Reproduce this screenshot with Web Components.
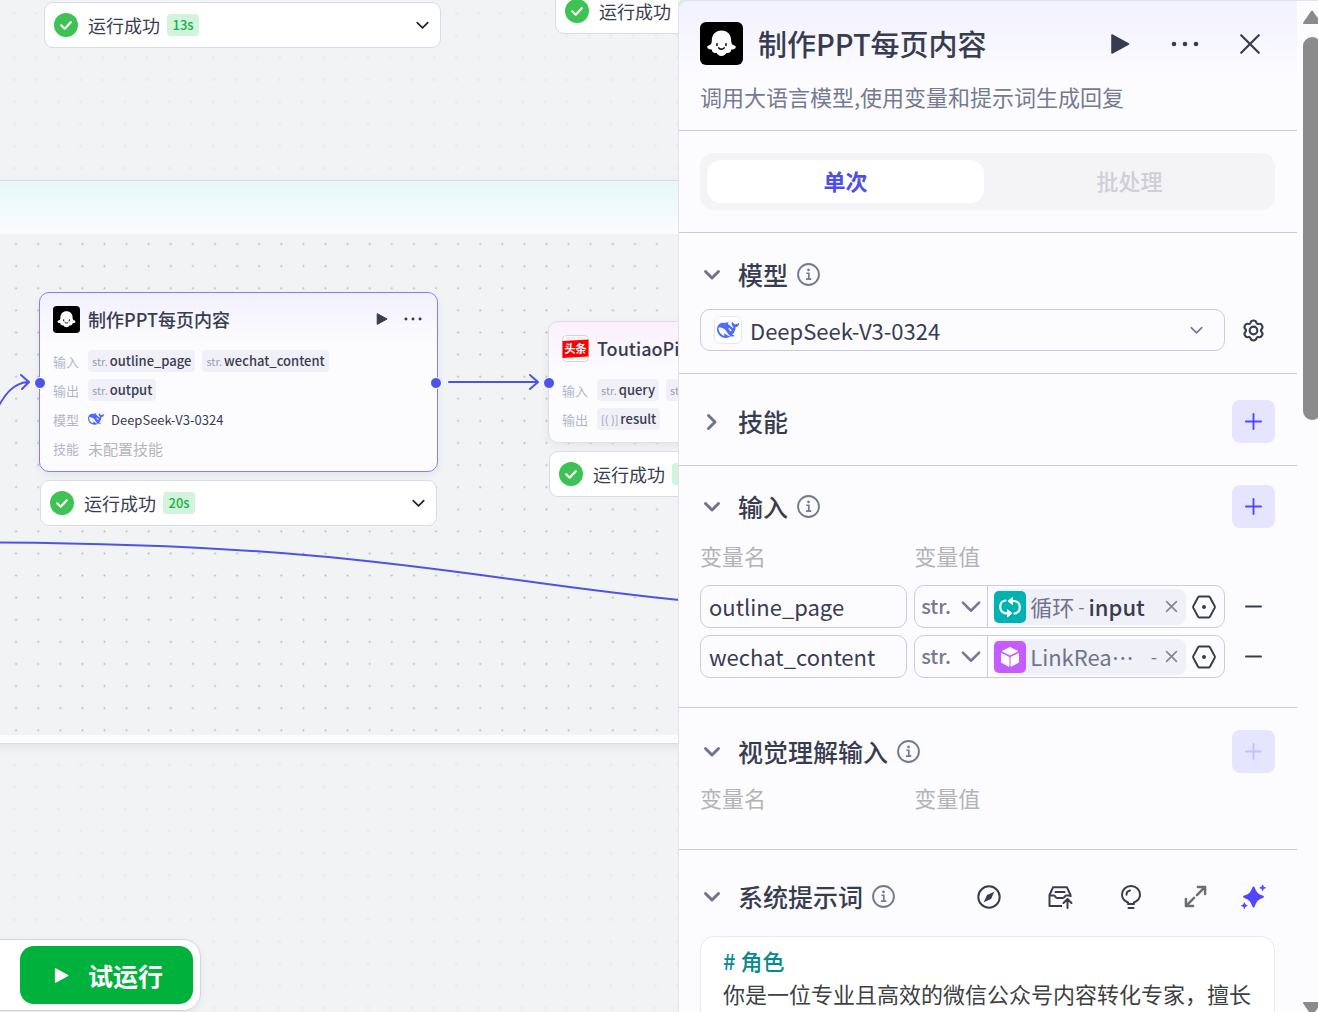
<!DOCTYPE html>
<html lang="zh-CN">
<head>
<meta charset="utf-8">
<title>工作流编辑器</title>
<style>
  body {
    margin: 0;
    font-family: "Noto Sans CJK SC", "Noto Sans", sans-serif;
    color: #383c4f;
    background: #f2f3f5;
  }
</style>
</head>
<body>
<flow-app>
  <flow-canvas slot="canvas">
    <flow-loop></flow-loop>
    <flow-edges></flow-edges>

    <run-status style="left: 44px; top: 2px" time="13s"></run-status>
    <run-status style="left: 555px; top: -12px"></run-status>

    <flow-node style="left: 39px; top: 292px; width: 399px" title="制作PPT每页内容" icon="ghost" selected>
      <node-row label="输入"><var-tag>outline_page</var-tag><var-tag>wechat_content</var-tag></node-row>
      <node-row label="输出"><var-tag>output</var-tag></node-row>
      <node-row label="模型"><ui-icon name="whale" style="--size: 16px; color: #4d6bfe"></ui-icon><model-name>DeepSeek-V3-0324</model-name></node-row>
      <node-row label="技能"><empty-text>未配置技能</empty-text></node-row>
    </flow-node>
    <run-status style="left: 40px; top: 480px" time="20s"></run-status>

    <flow-node style="left: 548px; top: 321px; width: 399px; --tint: #faf0fd" title="ToutiaoPi" icon="toutiao">
      <node-row label="输入"><var-tag>query</var-tag><var-tag></var-tag></node-row>
      <node-row label="输出"><var-tag type="[( )]">result</var-tag></node-row>
    </flow-node>
    <run-status style="left: 549px; top: 451px"></run-status>

    <flow-port style="left: 34px; top: 377px"></flow-port>
    <flow-port style="left: 430px; top: 377px"></flow-port>
    <flow-port style="left: 543px; top: 377px"></flow-port>

    <test-bar></test-bar>
  </flow-canvas>

  <side-panel slot="panel">
    <panel-header title="制作PPT每页内容">调用大语言模型,使用变量和提示词生成回复</panel-header>
    <mode-tabs></mode-tabs>

    <panel-section title="模型" info style="--top: 20px; --bottom: 22px; --gap: 13px">
      <model-picker></model-picker>
    </panel-section>

    <panel-section title="技能" collapsed style="--top: 26px; --bottom: 22px">
      <add-button slot="actions"></add-button>
    </panel-section>

    <panel-section title="输入" info style="--top: 19px; --bottom: 29px; --gap: 11px">
      <add-button slot="actions"></add-button>
      <var-labels></var-labels>
      <var-row name="outline_page" icon="loop" source="循环" field="input"></var-row>
      <var-row name="wechat_content" icon="cube" source="LinkRea⋯"></var-row>
    </panel-section>

    <panel-section title="视觉理解输入" info style="--top: 22px; --bottom: 29px; --gap: 8px">
      <add-button slot="actions" disabled></add-button>
      <var-labels></var-labels>
    </panel-section>

    <panel-section title="系统提示词" info style="--top: 25px; --bottom: 22px; --gap: 18px">
      <prompt-tools slot="actions"></prompt-tools>
      <prompt-editor></prompt-editor>
    </panel-section>
  </side-panel>
</flow-app>

<script>
// [viewBox, markup]
const ICONS = {
  ghost: ['0 0 43 43', `<rect width="43" height="43" rx="6" fill="#000"/>
    <path fill="#fff" d="M21.500 8.500c-5.900 0-9.700 4.300-9.700 10 0 1.700-.3 2.900-1.100 3.900-.9.900-3.500.9-3.500 2.400 0 1.900 2.300 3.100 4.600 2.700 0 2.600 2.200 4.100 4.700 3.300.8 2 2.800 3.200 5 3.200s4.200-1.200 5-3.200c2.500.8 4.700-.7 4.700-3.300 2.300.4 4.600-.8 4.600-2.700 0-1.500-2.600-1.500-3.500-2.400-.8-1-1.100-2.200-1.100-3.900 0-5.700-3.800-10-9.700-10z"/>
    <path fill="none" stroke="#000" stroke-width="1.500" stroke-linecap="round" d="M17 21.800v1.800M26 21.800v1.800M18.800 25.900c1.500 1.800 4 1.800 5.400 0"/>`],
  toutiao: ['0 0 27 27', `<rect x=".5" y=".5" width="26" height="26" rx="4" fill="#fff" stroke="#cfd1dc"/>
    <path d="M4 3h9M15 3h8M4 24h8M14 24h9" stroke="#ddd"/><path fill="#f00" d="M.5 6 26.500 4.500v17L.5 23z"/>
    <text x="13.500" y="18" text-anchor="middle" font-size="11" font-weight="700" fill="#fff">头条</text>`],
  whale: ['0 0 24 24', `<path fill="currentColor" d="M23.748 4.482c-.254-.124-.364.113-.512.234-.051.039-.094.09-.137.136-.372.397-.806.657-1.373.626-.829-.046-1.537.214-2.163.848-.133-.782-.575-1.248-1.247-1.548-.352-.156-.708-.311-.955-.65-.172-.241-.219-.51-.305-.774-.055-.16-.11-.323-.293-.35-.2-.031-.278.136-.356.276-.313.572-.434 1.202-.422 1.84.027 1.436.633 2.58 1.838 3.393.137.093.172.187.129.323-.082.28-.18.552-.266.833-.055.179-.137.217-.329.14a5.526 5.526 0 01-1.736-1.18c-.857-.828-1.631-1.742-2.597-2.458a11.365 11.365 0 00-.689-.471c-.985-.957.13-1.743.388-1.836.27-.098.093-.432-.779-.428-.872.004-1.67.295-2.687.684a3.055 3.055 0 01-.465.137 9.597 9.597 0 00-2.883-.102c-1.885.21-3.39 1.102-4.497 2.623C.082 8.606-.231 10.684.152 12.85c.403 2.284 1.569 4.175 3.36 5.653 1.858 1.533 3.997 2.284 6.438 2.14 1.482-.085 3.133-.284 4.994-1.86.47.234.962.327 1.78.397.63.059 1.236-.03 1.705-.128.735-.156.684-.837.419-.961-2.155-1.004-1.682-.595-2.113-.926 1.096-1.296 2.746-2.642 3.392-7.003.05-.347.007-.565 0-.845-.004-.17.035-.237.23-.256a4.173 4.173 0 001.545-.475c1.396-.763 1.96-2.015 2.093-3.517.02-.23-.004-.467-.247-.588zM11.581 18c-2.089-1.642-3.102-2.183-3.52-2.16-.392.024-.321.471-.235.763.09.288.207.486.371.739.114.167.192.416-.113.603-.673.416-1.842-.14-1.897-.167-1.361-.802-2.5-1.86-3.301-3.307-.774-1.393-1.224-2.887-1.298-4.482-.02-.386.093-.522.477-.592a4.696 4.696 0 011.529-.039c2.132.312 3.946 1.265 5.468 2.774.868.86 1.525 1.887 2.202 2.891.72 1.066 1.494 2.082 2.48 2.914.348.292.625.514.891.677-.802.09-2.14.11-3.054-.614zm1-6.44a.306.306 0 01.415-.287.302.302 0 01.2.288.306.306 0 01-.31.307.303.303 0 01-.304-.308zm3.11 1.596c-.2.081-.399.151-.59.16a1.245 1.245 0 01-.798-.254c-.274-.23-.47-.358-.552-.758a1.73 1.73 0 01.016-.588c.07-.327-.008-.537-.239-.727-.187-.156-.426-.199-.688-.199a.559.559 0 01-.254-.078c-.11-.054-.2-.19-.114-.358.028-.054.16-.186.192-.21.356-.202.767-.136 1.146.016.352.144.618.408 1.001.782.391.451.462.576.685.914.176.265.336.537.445.848.067.195-.019.354-.25.452z"/>`],
  check: ['0 0 24 24', `<circle cx="12" cy="12" r="12" fill="#3ec254"/><path d="M7.200 12.300 10.700 15.700 16.800 9.200" fill="none" stroke="#fff" stroke-width="2.200" stroke-linecap="round" stroke-linejoin="round"/>`],
  play: ['0 0 20 20', `<path fill="currentColor" stroke="currentColor" stroke-width="1.600" stroke-linejoin="round" d="M2 1v18L18.500 10z"/>`],
  dots: ['0 0 28 28', `<g fill="currentColor"><circle cx="3" cy="14" r="2.300"/><circle cx="14" cy="14" r="2.300"/><circle cx="25" cy="14" r="2.300"/></g>`],
  close: ['0 0 20 20', `<path d="M1.200 1.200 18.800 18.800M18.800 1.200 1.200 18.800" stroke="currentColor" stroke-width="2.200" stroke-linecap="round"/>`],
  cross: ['0 0 12 12', `<path d="M1.500 1.500 10.500 10.500M10.500 1.500 1.500 10.500" stroke="currentColor" stroke-width="1.600" stroke-linecap="round"/>`],
  chevron: ['0 0 16 16', `<path d="M1.500 4.500 8 11 14.500 4.500" fill="none" stroke="currentColor" stroke-width="var(--stroke, 2)" stroke-linecap="round" stroke-linejoin="round"/>`],
  info: ['0 0 24 24', `<circle cx="12" cy="12" r="10.900" fill="none" stroke="currentColor" stroke-width="2"/>
    <circle cx="12" cy="7.200" r="1.400" fill="currentColor"/><path d="M9.800 10.700h2.500v5.900M9.300 16.800h5.600" fill="none" stroke="currentColor" stroke-width="1.800"/>`],
  gear: ['0 0 24 24', `<g fill="none" stroke="currentColor" stroke-width="2.200"><circle cx="12" cy="12" r="4"/>
    <path stroke-linejoin="round" d="M8.900 3.900C9.300 2.200 10.300 1.600 12 1.600s2.700.6 3.100 2.300c.3 1 1.300 1.500 2.300 1.200 1.700-.5 2.700.1 3.500 1.600.8 1.400.8 2.500-.4 3.700-.8.900-.8 2.300 0 3.200 1.200 1.200 1.200 2.300.4 3.700-.8 1.500-1.800 2.100-3.500 1.600-1-.3-2 .2-2.300 1.200-.4 1.700-1.400 2.300-3.100 2.300s-2.700-.6-3.100-2.300c-.3-1-1.300-1.500-2.300-1.200-1.700.5-2.700-.1-3.500-1.600-.8-1.400-.8-2.500.4-3.700.8-.9.8-2.300 0-3.200-1.200-1.200-1.200-2.300-.4-3.700.8-1.500 1.800-2.100 3.500-1.600 1 .3 2-.2 2.300-1.200z"/></g>`],
  plus: ['0 0 18 18', `<path d="M9 1v16M1 9h16" stroke="currentColor" stroke-width="2" stroke-linecap="round"/>`],
  minus: ['0 0 18 18', `<path d="M1 9h16" stroke="currentColor" stroke-width="2" stroke-linecap="round"/>`],
  hex: ['0 0 24 24', `<path fill="none" stroke="currentColor" stroke-width="2" stroke-linejoin="round" d="M7.300 1.500h9.400c.5 0 .9.200 1.200.7l4.800 8.900c.3.600.3 1.200 0 1.800l-4.800 8.900c-.3.500-.7.700-1.200.7H7.300c-.5 0-.9-.2-1.200-.7l-4.800-8.900c-.3-.6-.3-1.200 0-1.800l4.800-8.900c.3-.5.700-.7 1.200-.7z"/><circle cx="12" cy="12" r="2" fill="currentColor"/>`],
  loop: ['0 0 32 32', `<rect width="32" height="32" rx="5" fill="#00b2b2"/>
    <path fill="none" stroke="#fff" stroke-width="2.200" stroke-linecap="round" d="M11.500 9.500C4.500 10.500 4.500 21 11.500 22.300H15M20.500 22.500c7-1 7-11.500 0-12.500H17"/>
    <path fill="#fff" stroke="#fff" stroke-linejoin="round" d="M18.500 6.500v7.200L14 10zM13.500 18.700v7.200l4.500-3.600z"/>`],
  cube: ['0 0 32 32', `<rect width="32" height="32" rx="5" fill="#c55cff"/>
    <g fill="#fff" stroke="#fff" stroke-linejoin="round"><path d="M16 6.500 23.500 10.200 16 14 8.500 10.200z"/><path d="M7.500 12.500 15 16.300v9L7.500 21.300zM24.500 12.500 17 16.300v9l7.500-4z"/></g>`],
  compass: ['0 0 24 24', `<circle cx="12" cy="12" r="10.700" fill="none" stroke="currentColor" stroke-width="2"/><path fill="currentColor" d="M17.300 6.700 14 14 6.700 17.300 10 10z"/>`],
  inbox: ['0 0 24 24', `<g fill="none" stroke="currentColor" stroke-width="2" stroke-linejoin="round"><path d="M14 21H1.500V10L5 2.300h14L22.500 10v2"/><path d="M1.500 10.500H6c1.200 0 1.500 2.500 3 2.500h6c1.500 0 1.800-2.500 3-2.500h4.500"/><path stroke-linecap="round" d="M7.500 7h9M19.500 23v-8.500M15.500 18l4-4 4 4"/></g>`],
  bulb: ['0 0 24 24', `<g fill="none" stroke="currentColor" stroke-width="2" stroke-linecap="round" stroke-linejoin="round"><path d="M9 19v-1.500C5.500 16 3 13.300 3 9.800 3 4.600 7 1 12 1s9 3.600 9 8.800c0 3.500-2.500 6.200-6 7.700V19z"/><path d="M7.500 9.800c0-2.200 1.500-3.900 3.500-4.300M9.500 23h5"/></g>`],
  expand: ['0 0 24 24', `<g fill="none" stroke="currentColor" stroke-width="2.600" stroke-linecap="round" stroke-linejoin="round"><path d="M14.500 2H22v7.500M22 2l-8.500 8.500M9.500 22H2v-7.500M2 22l8.500-8.500"/></g>`],
  sparkle: ['0 0 26 26', `<g fill="currentColor" stroke="currentColor" stroke-linejoin="round"><path stroke-width="2" d="M13 3.500c1.900 5.800 4 7.900 9.800 9.800-5.800 1.900-7.900 4.200-9.800 10.200-1.900-6-4-8.300-9.800-10.200 5.800-1.900 7.900-4 9.800-9.800z"/><path d="M22.500 1c.5 2 1 2.500 3 3-2 .5-2.500 1-3 3-.5-2-1-2.500-3-3 2-.5 2.500-1 3-3zM3.500 19.500c.5 2 1 2.500 3 3-2 .5-2.500 1-3 3-.5-2-1-2.500-3-3 2-.5 2.500-1 3-3z"/></g>`],
};

// Base class: attaches an open root and fills it from render()
class Base extends HTMLElement {
  constructor() {
    super();
    this.attachShadow({ mode: 'open' });
  }

  connectedCallback() {
    this.shadowRoot.innerHTML = `
      <style>
        * { box-sizing: border-box; }
        :host { display: block; box-sizing: border-box; }
        button, input, select { font: inherit; color: inherit; margin: 0; padding: 0; border: 0; background: none; }
        button, select { cursor: pointer; }
        button { display: grid; place-items: center; }
        h1, h2, p { margin: 0; }
      </style>
      ${this.render()}
    `;
  }

  attr(name) {
    return this.getAttribute(name) || '';
  }
}

class UiIcon extends Base {
  render() {
    const [box, body] = ICONS[this.attr('name')];
    return `
      <style>
        :host { flex: none; width: var(--size, 24px); height: var(--size, 24px); }
        svg { display: block; width: 100%; height: 100%; overflow: visible; }
      </style>
      <svg viewBox="${box}" aria-hidden="true">${body}</svg>
    `;
  }
}

class FlowApp extends Base {
  render() {
    return `
      <style>
        :host {
          display: grid;
          grid-template-columns: minmax(0, 1fr) 640px;
          grid-template-rows: 100vh;
          overflow: hidden;
        }
        slot[name="canvas"]::slotted(*) { grid-area: 1 / 1 / 2 / 3; }
        slot[name="panel"]::slotted(*) { grid-area: 1 / 2 / 2 / 3; }
      </style>
      <slot name="canvas"></slot>
      <slot name="panel"></slot>
    `;
  }
}

class FlowCanvas extends Base {
  render() {
    return `
      <style>
        :host { position: relative; overflow: hidden; background: #f2f3f5; }
        svg { position: absolute; width: 100%; height: 100%; }
      </style>
      <svg aria-hidden="true">
        <pattern id="dots" x="3.400" y="2.400" width="22.100" height="22.100" patternUnits="userSpaceOnUse">
          <circle cx="11" cy="11" r="1.700" fill="#ebecef"/>
        </pattern>
        <rect width="100%" height="100%" fill="url(#dots)"/>
      </svg>
      <slot></slot>
    `;
  }
}

class FlowLoop extends Base {
  render() {
    return `
      <style>
        :host {
          position: absolute;
          left: -20px;
          right: -20px;
          top: 180px;
          height: 564px;
          padding: 53px 0 8px;
          border: 1px solid #d9dbe6;
          background: linear-gradient(#e7f8f7, #fcfcff 53px);
          box-shadow: 0 3px 10px rgba(0, 0, 0, .07);
        }
        svg { display: block; width: 100%; height: 100%; background: #f2f3f5; }
      </style>
      <svg aria-hidden="true">
        <pattern id="dots" x="2" y="-1" width="22.100" height="22.100" patternUnits="userSpaceOnUse">
          <circle cx="11" cy="11" r="1" fill="#b4b6ba"/>
        </pattern>
        <rect width="100%" height="100%" fill="url(#dots)"/>
      </svg>
    `;
  }
}

class FlowEdges extends Base {
  render() {
    return `
      <style>
        :host { position: absolute; inset: 0; }
        svg { width: 100%; height: 100%; }
      </style>
      <svg aria-hidden="true" fill="none" stroke="#4d53e8" stroke-width="2" stroke-linecap="round" stroke-linejoin="round">
        <path d="M-4 411C4 395 13 383 28 382M21 375l8 7-7 7"/>
        <path d="M449 382h88M530 375l8 7-8 7"/>
        <path d="M-2 542.500C380 545 480 582 700 602"/>
      </svg>
    `;
  }
}

class FlowPort extends Base {
  render() {
    return `
      <style>
        :host {
          position: absolute;
          width: 12px;
          height: 12px;
          border: 1px solid #fff;
          border-radius: 50%;
          background: #4d53e8;
        }
      </style>
    `;
  }
}

class RunStatus extends Base {
  render() {
    return `
      <style>
        :host {
          position: absolute;
          display: flex;
          align-items: center;
          width: 397px;
          height: 46px;
          padding: 0 11px 0 9px;
          border: 1px solid #d9dbe8;
          border-radius: 9px;
          background: #fff;
        }
        .text { margin: 0 7px 0 10px; white-space: nowrap; font-size: 18px; }
        .time {
          min-width: 32px;
          height: 22px;
          padding: 0 5px;
          border-radius: 4px;
          background: #d2f3dc;
          color: #12b348;
          font-size: 13px;
          line-height: 22px;
          font-weight: 500;
          text-align: center;
        }
        button { margin-left: auto; color: #1d1f2b; }
      </style>
      <ui-icon name="check"></ui-icon>
      <span class="text">运行成功</span>
      <span class="time">${this.attr('time')}</span>
      <button aria-label="展开"><ui-icon name="chevron" style="--size: 13px"></ui-icon></button>
    `;
  }
}

class FlowNode extends Base {
  render() {
    const selected = this.hasAttribute('selected');
    return `
      <style>
        :host {
          position: absolute;
          padding: 12px 13px;
          border: 1px solid ${selected ? '#857ff5' : '#dcdde8'};
          border-radius: 10px;
          background: linear-gradient(var(--tint, #f1f0ff), #fcfcff 50px);
          box-shadow: 0 3px 8px rgba(0, 0, 0, .06);
        }
        header { display: flex; align-items: center; height: 28px; margin-bottom: 17px; }
        h2 { flex: 1; margin-left: 8px; font-size: 18px; line-height: 28px; font-weight: 500; white-space: nowrap; }
        .tools { display: flex; gap: 16px; align-items: center; margin-right: 2px; }
        .rows { display: grid; gap: 7px; }
      </style>
      <header>
        <ui-icon name="${this.attr('icon')}" style="--size: 27px"></ui-icon>
        <h2>${this.attr('title')}</h2>
        <div class="tools">
          <button aria-label="运行"><ui-icon name="play" style="--size: 12px"></ui-icon></button>
          <button aria-label="更多"><ui-icon name="dots" style="--size: 18px"></ui-icon></button>
        </div>
      </header>
      <div class="rows"><slot></slot></div>
    `;
  }
}

class NodeRow extends Base {
  render() {
    return `
      <style>
        :host { display: flex; align-items: center; height: 22px; gap: 7px; }
        .label { margin-right: 2px; font-size: 13px; color: #b3b6c9; white-space: nowrap; }
      </style>
      <span class="label">${this.attr('label')}</span>
      <slot></slot>
    `;
  }
}

class VarTag extends Base {
  render() {
    return `
      <style>
        :host {
          display: flex;
          align-items: center;
          gap: 2px;
          height: 22px;
          padding: 0 4px;
          border-radius: 4px;
          background: #f0f0f8;
          font-size: 13px;
          line-height: 22px;
          font-weight: 500;
          white-space: nowrap;
        }
        .type { font-size: 11px; font-weight: 400; color: #9b9fb8; }
      </style>
      <span class="type">${this.attr('type') || 'str.'}</span><slot></slot>
    `;
  }
}

class ModelName extends Base {
  render() {
    return `<style>:host { font-size: 13px; }</style><slot></slot>`;
  }
}

class EmptyText extends Base {
  render() {
    return `<style>:host { font-size: 15px; color: #b4b5ba; }</style><slot></slot>`;
  }
}

class TestBar extends Base {
  render() {
    return `
      <style>
        :host {
          position: absolute;
          left: -20px;
          bottom: 1px;
          padding: 6px 7px 6px 39px;
          border: 1px solid #d3d5e6;
          border-radius: 18px;
          background: #fff;
          box-shadow: 0 3px 10px rgba(0, 0, 0, .06);
        }
        button {
          grid-auto-flow: column;
          gap: 19px;
          height: 58px;
          padding: 0 30px 0 34px;
          border-radius: 14px;
          background: #00b23c;
          color: #fff;
          font-size: 25px;
          font-weight: 700;
        }
      </style>
      <button><ui-icon name="play" style="--size: 15px"></ui-icon>试运行</button>
    `;
  }
}

class SidePanel extends Base {
  render() {
    return `
      <style>
        :host {
          position: relative;
          display: grid;
          grid-template-columns: minmax(0, 1fr) 21px;
          height: 100%;
          overflow: hidden;
          border: 1px solid #e2e2f0;
          border-width: 1px 0 0 1px;
          border-radius: 10px 0 0 0;
          background: #fcfcff;
        }
        .body { overflow: hidden; }
        .bar { display: flex; flex-direction: column; align-items: flex-start; padding: 9px 0 0 6px; overflow: hidden; }
        .arrow { flex: none; width: 18px; height: 14px; fill: #8b8b8b; stroke: #8b8b8b; stroke-width: 2; stroke-linejoin: round; }
        .thumb { flex: none; width: 18px; height: 383px; margin: 13px 0 auto; border-radius: 9px; background: #8b8b8b; }
        .down { margin-bottom: -4px; }
      </style>
      <div class="body"><slot></slot></div>
      <div class="bar" aria-hidden="true">
        <svg class="arrow" viewBox="0 0 18 14"><path d="M9 1.500 17 13H1z"/></svg>
        <div class="thumb"></div>
        <svg class="arrow down" viewBox="0 0 18 14"><path d="M9 12.500 17 1H1z"/></svg>
      </div>
    `;
  }
}

class PanelHeader extends Base {
  render() {
    return `
      <style>
        :host {
          height: 130px;
          padding: 21px 22px 0 21px;
          border-bottom: 1px solid #c9cbdf;
          background: linear-gradient(#f1f0ff, #fcfcff 76px);
        }
        header { display: flex; align-items: center; height: 43px; }
        h1 { flex: 1; margin-left: 15px; font-size: 29px; line-height: 43px; font-weight: 500; }
        .tools { display: flex; gap: 22px; margin-right: 4px; }
        .tools button { width: 43px; height: 43px; }
        p { margin-top: 14px; font-size: 22px; line-height: 34px; color: #747a92; white-space: nowrap; }
      </style>
      <header>
        <ui-icon name="ghost" style="--size: 43px"></ui-icon>
        <h1>${this.attr('title')}</h1>
        <div class="tools">
          <button aria-label="运行"><ui-icon name="play" style="--size: 20px"></ui-icon></button>
          <button aria-label="更多"><ui-icon name="dots" style="--size: 28px"></ui-icon></button>
          <button aria-label="关闭"><ui-icon name="close" style="--size: 20px"></ui-icon></button>
        </div>
      </header>
      <p><slot></slot></p>
    `;
  }
}

class ModeTabs extends Base {
  render() {
    return `
      <style>
        :host { padding: 22px 22px 22px 21px; border-bottom: 1px solid #c9cbdf; }
        div {
          display: grid;
          grid-template-columns: 1fr 1fr;
          gap: 7px;
          padding: 7px;
          border-radius: 14px;
          background: #f4f4f7;
        }
        button { height: 43px; padding-bottom: 3px; border-radius: 14px; font-size: 22px; font-weight: 500; color: #cfcfd4; }
        button[aria-selected="true"] { background: #fff; color: #4d4fe8; font-weight: 700; }
      </style>
      <div role="tablist">
        <button role="tab" aria-selected="true">单次</button>
        <button role="tab" aria-selected="false">批处理</button>
      </div>
    `;
  }
}

class PanelSection extends Base {
  render() {
    const turn = this.hasAttribute('collapsed') ? 'transform: rotate(-90deg);' : '';
    return `
      <style>
        :host { padding: var(--top) 22px var(--bottom) 21px; border-bottom: 1px solid #c9cbdf; }
        header { display: flex; align-items: center; height: 43px; }
        .toggle { width: 24px; height: 24px; margin-right: 14px; color: #6f748c; }
        h2 { margin-right: 9px; padding-bottom: 1px; font-size: 25px; line-height: 42px; font-weight: 500; }
        .info { color: #737991; }
        .actions { margin-left: auto; }
        .content { display: grid; gap: 7px; margin-top: var(--gap, 0); }
      </style>
      <header>
        <button class="toggle" aria-label="折叠"><ui-icon name="chevron" style="--size: 16px; --stroke: 3px; ${turn}"></ui-icon></button>
        <h2>${this.attr('title')}</h2>
        ${this.hasAttribute('info') ? '<ui-icon class="info" name="info" style="--size: 23px"></ui-icon>' : ''}
        <div class="actions"><slot name="actions"></slot></div>
      </header>
      <div class="content"><slot></slot></div>
    `;
  }
}

class ModelPicker extends Base {
  render() {
    return `
      <style>
        :host { display: grid; grid-template-columns: minmax(0, 1fr) 43px; gap: 7px; }
        label {
          display: flex;
          align-items: center;
          height: 42px;
          padding: 0 21px 0 13px;
          border: 1px solid #c9cbdf;
          border-radius: 10px;
        }
        .logo { padding: 2px; border: 1px solid #e8e8f2; border-radius: 6px; background: #fff; color: #4d6bfe; }
        select { flex: 1; appearance: none; height: 40px; margin-left: 8px; font-size: 22px; outline: 0; }
        .arrow { color: #747a92; }
      </style>
      <label>
        <span class="logo"><ui-icon name="whale" style="--size: 22px"></ui-icon></span>
        <select aria-label="模型"><option>DeepSeek-V3-0324</option></select>
        <ui-icon class="arrow" name="chevron" style="--size: 13px; --stroke: 2px"></ui-icon>
      </label>
      <button aria-label="模型设置"><ui-icon name="gear" style="--size: 23px"></ui-icon></button>
    `;
  }
}

class AddButton extends Base {
  render() {
    const disabled = this.hasAttribute('disabled');
    return `
      <style>
        button { width: 43px; height: 43px; border-radius: 8px; background: #e5e5ff; color: #5147ff; }
        button:disabled { color: #c2c2ff; cursor: default; }
      </style>
      <button aria-label="添加" ${disabled ? 'disabled' : ''}><ui-icon name="plus" style="--size: 17px"></ui-icon></button>
    `;
  }
}

class VarLabels extends Base {
  render() {
    return `
      <style>
        :host {
          display: grid;
          grid-template-columns: 2fr 3fr 43px;
          gap: 7px;
          margin-bottom: 7px;
          font-size: 22px;
          line-height: 32px;
          color: #b3b3b7;
        }
      </style>
      <span>变量名</span><span>变量值</span>
    `;
  }
}

class VarRow extends Base {
  render() {
    const field = this.attr('field');
    return `
      <style>
        :host { display: grid; grid-template-columns: 2fr 3fr 43px; gap: 7px; }
        input { min-width: 0; height: 43px; padding: 0 8px 1px; border: 1px solid #c9cbdf; border-radius: 10px; font-size: 22px; outline: 0; }
        .value { display: flex; align-items: center; height: 43px; min-width: 0; border: 1px solid #c9cbdf; border-radius: 10px; }
        .type { display: grid; width: 73px; height: 41px; border-right: 1px solid #c9cbdf; align-items: center; color: #747a92; }
        .type select {
          grid-area: 1 / 1;
          width: 100%;
          padding: 0 0 3px 6px;
          appearance: none;
          outline: 0;
          font-size: 20px;
          font-weight: 500;
        }
        .type ui-icon { grid-area: 1 / 1; justify-self: end; margin-right: 6px; pointer-events: none; }
        .chip {
          display: flex;
          flex: 1;
          align-items: center;
          min-width: 0;
          height: 36px;
          margin: 0 6px 0 5px;
          padding: 0 8px 0 1px;
          border-radius: 8px;
          background: #f0f0f8;
          font-size: 22px;
          line-height: 34px;
          white-space: nowrap;
        }
        .chip span { padding-bottom: 2px; }
        .source { margin-left: 4px; color: #6f748c; }
        .dash { margin: 0 4px; font-size: 18px; color: #6f748c; }
        .field { font-weight: 500; }
        .chip button { margin-left: auto; color: #85879a; }
        .ref { margin-right: 8px; }
      </style>
      <input aria-label="变量名" value="${this.attr('name')}">
      <div class="value">
        <div class="type">
          <select aria-label="变量类型"><option>str.</option></select>
          <ui-icon name="chevron" style="--size: 20px; --stroke: 2px"></ui-icon>
        </div>
        <div class="chip">
          <ui-icon name="${this.attr('icon')}" style="--size: 32px"></ui-icon>
          <span class="source">${this.attr('source')}</span>
          <span class="dash"${field ? '' : ' style="margin-left: auto"'}>-</span>
          ${field ? `<span class="field">${field}</span>` : ''}
          <button aria-label="清除" ${field ? '' : 'style="margin-left: 4px"'}><ui-icon name="cross" style="--size: 13px"></ui-icon></button>
        </div>
        <button class="ref" aria-label="引用变量"><ui-icon name="hex"></ui-icon></button>
      </div>
      <button aria-label="删除"><ui-icon name="minus" style="--size: 17px"></ui-icon></button>
    `;
  }
}

class PromptTools extends Base {
  render() {
    return `
      <style>
        :host { display: flex; gap: 15px; }
        button { width: 56px; height: 43px; }
        .gray, .ai { width: 43px; }
        .gray { color: #6b6d75; }
        .ai { color: #5147ff; }
      </style>
      <button aria-label="探索"><ui-icon name="compass"></ui-icon></button>
      <button aria-label="提示词库"><ui-icon name="inbox"></ui-icon></button>
      <button aria-label="示例"><ui-icon name="bulb"></ui-icon></button>
      <button class="gray" aria-label="展开"><ui-icon name="expand" style="--size: 23px"></ui-icon></button>
      <button class="ai" aria-label="优化"><ui-icon name="sparkle" style="--size: 25px"></ui-icon></button>
    `;
  }
}

class PromptEditor extends Base {
  render() {
    return `
      <style>
        :host {
          min-height: 300px;
          padding: 7px 22px;
          border: 1px solid #e9e9ee;
          border-radius: 14px;
          background: #fff;
          font-size: 22px;
          line-height: 33px;
          color: #3e3f42;
        }
        div { outline: 0; }
        .heading { color: #078a8f; font-weight: 500; }
      </style>
      <div role="textbox" aria-label="系统提示词" contenteditable="true" spellcheck="false">
        <p class="heading"># 角色</p>
        <p>你是一位专业且高效的微信公众号内容转化专家，擅长</p>
      </div>
    `;
  }
}

customElements.define('ui-icon', UiIcon);
customElements.define('flow-app', FlowApp);
customElements.define('flow-canvas', FlowCanvas);
customElements.define('flow-loop', FlowLoop);
customElements.define('flow-edges', FlowEdges);
customElements.define('flow-port', FlowPort);
customElements.define('run-status', RunStatus);
customElements.define('flow-node', FlowNode);
customElements.define('node-row', NodeRow);
customElements.define('var-tag', VarTag);
customElements.define('model-name', ModelName);
customElements.define('empty-text', EmptyText);
customElements.define('test-bar', TestBar);
customElements.define('side-panel', SidePanel);
customElements.define('panel-header', PanelHeader);
customElements.define('mode-tabs', ModeTabs);
customElements.define('panel-section', PanelSection);
customElements.define('model-picker', ModelPicker);
customElements.define('add-button', AddButton);
customElements.define('var-labels', VarLabels);
customElements.define('var-row', VarRow);
customElements.define('prompt-tools', PromptTools);
customElements.define('prompt-editor', PromptEditor);
</script>
</body>
</html>
